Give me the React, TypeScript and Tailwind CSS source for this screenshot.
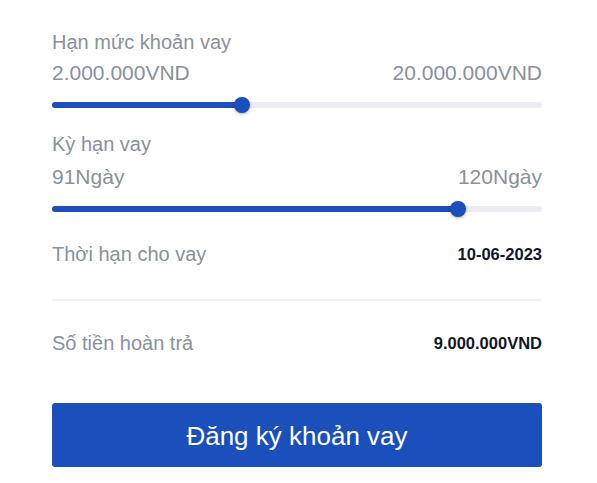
import React from "react";

function Slider({ pos }: { pos: number }) {
  return (
    <div className="relative h-[20px] w-full">
      <div className="absolute left-0 right-0 top-[7px] h-[6px] rounded-full bg-[#ebedf2]" />
      <div
        className="absolute left-0 top-[7px] h-[6px] rounded-full bg-[#1b4fbb]"
        style={{ width: pos }}
      />
      <div
        className="absolute top-[2px] h-[16px] w-[16px] -translate-x-1/2 rounded-full bg-[#1b4fbb] shadow-[0_1px_3px_rgba(0,0,0,0.35)]"
        style={{ left: pos }}
      />
    </div>
  );
}

export default function App() {
  return (
    <div className="min-h-[483px] w-[597px] bg-white font-['Liberation_Sans',Arial,sans-serif]">
      <div className="ml-[52px] w-[490px] pt-[28px] text-[20px] leading-[28px] text-[#8a919b]">
        <div>Hạn mức khoản vay</div>
        <div className="mt-[3px] flex justify-between text-[21px]">
          <span>2.000.000VND</span>
          <span>20.000.000VND</span>
        </div>
        <div className="mt-[8px]">
          <Slider pos={190} />
        </div>

        <div className="mt-[15px]">Kỳ hạn vay</div>
        <div className="mt-[5px] flex justify-between text-[21px]">
          <span>91Ngày</span>
          <span>120Ngày</span>
        </div>
        <div className="mt-[8px]">
          <Slider pos={406} />
        </div>

        <div className="mt-[21px] flex items-center justify-between">
          <span>Thời hạn cho vay</span>
          <span className="text-[16.5px] font-bold text-[#111827]">10-06-2023</span>
        </div>
        <div className="mt-[31px] h-[2px] bg-[#f1f2f6]" />
        <div className="mt-[28px] flex items-center justify-between">
          <span>Số tiền hoàn trả</span>
          <span className="text-[16.5px] font-bold text-[#111827]">9.000.000VND</span>
        </div>

        <button className="mt-[46px] flex h-[64px] w-full items-center justify-center rounded-[3px] bg-[#1b4fbb] pt-[2px] text-[26px] text-white">
          Đăng ký khoản vay
        </button>
      </div>
    </div>
  );
}
